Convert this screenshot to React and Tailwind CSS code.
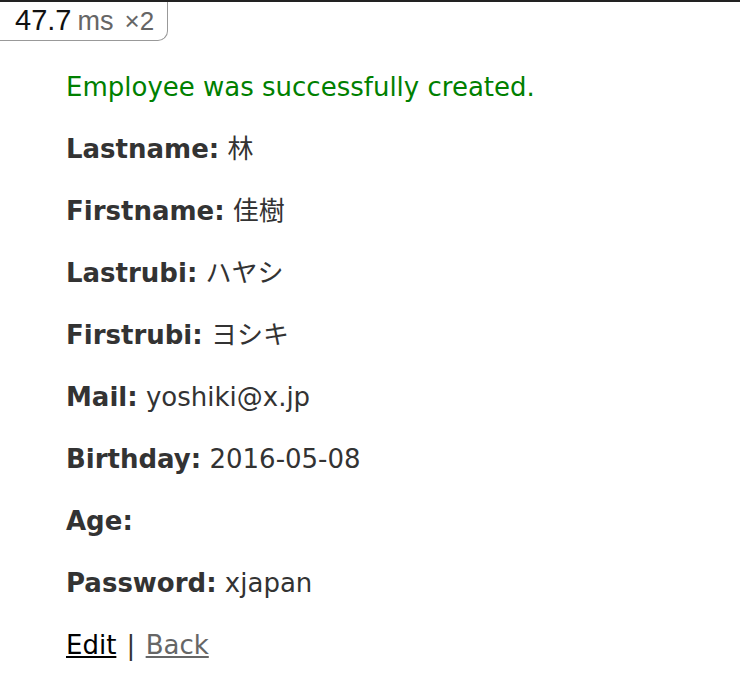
import React from 'react'

const FIELDS = [
  ['Lastname', '林'],
  ['Firstname', '佳樹'],
  ['Lastrubi', 'ハヤシ'],
  ['Firstrubi', 'ヨシキ'],
  ['Mail', 'yoshiki@x.jp'],
  ['Birthday', '2016-05-08'],
  ['Age', ''],
  ['Password', 'xjapan'],
]

const FONT = "font-['Verdana','DejaVu_Sans','Noto_Sans_CJK_JP',sans-serif]"

function ProfilerBadge() {
  return (
    <div className="absolute left-0 top-0 w-full">
      <div className="h-[2px] w-full bg-[#222]" />
      <div className="inline-flex h-[39px] items-baseline border-r border-b border-[#999] bg-white rounded-br-[10px] pl-[15px] pr-[13px] pt-[3px] font-['Liberation_Sans',Arial,sans-serif] text-[29px] leading-[30px]">
        <span className="text-[#111]">47.7</span>
        <span className="ml-[6px] text-[#666] text-[27px]">ms</span>
        <span className="ml-[11px] text-[#666] text-[26px]">×2</span>
      </div>
    </div>
  )
}

export default function App() {
  return (
    <div className={`relative h-[686px] overflow-hidden bg-white text-[#333] ${FONT} text-[26px] leading-[36px]`}>
      <ProfilerBadge />
      <div className="px-[66px] pt-[69px]">
        <p className="text-[#008000]">Employee was successfully created.</p>
        {FIELDS.map(([label, value]) => (
          <p key={label} className="mt-[26px]">
            <strong className="font-bold">{label}:</strong> {value}
          </p>
        ))}
        <p className="mt-[26px]">
          <a href="#" className="text-black underline">Edit</a>
          <span className="mx-[2px]">{' | '}</span>
          <a href="#" className="text-[#666] underline">Back</a>
        </p>
      </div>
    </div>
  )
}
